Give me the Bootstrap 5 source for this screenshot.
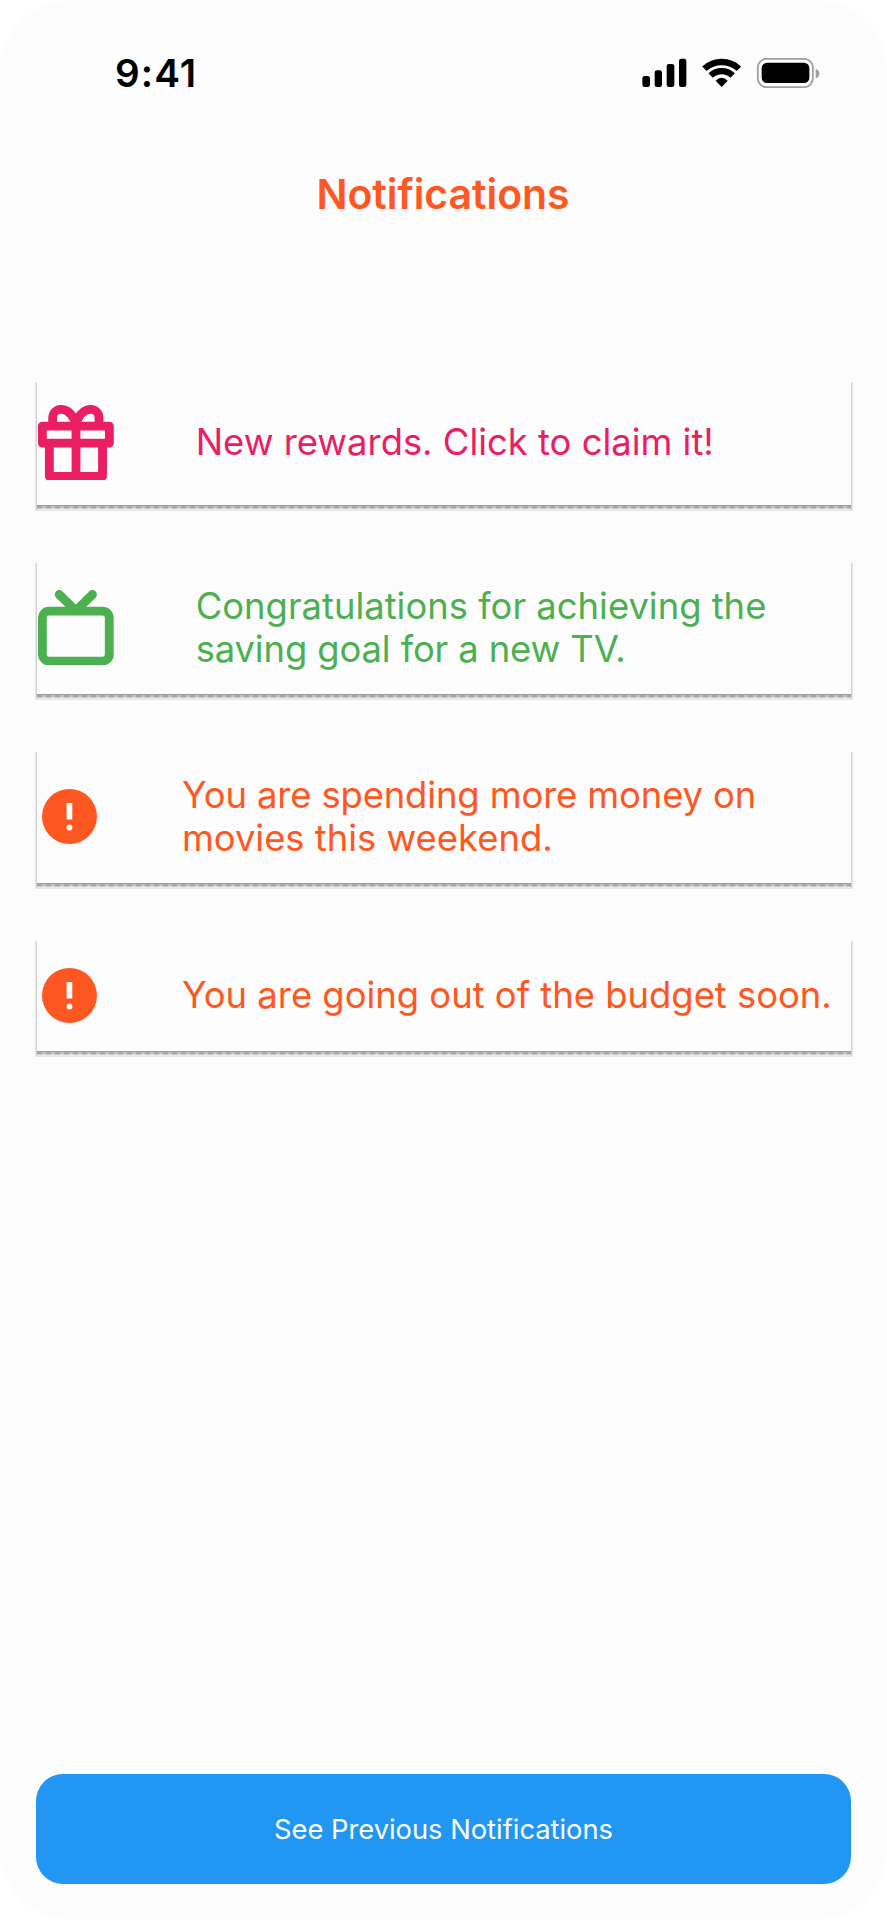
<!DOCTYPE html>
<html lang="en">
<head>
<meta charset="utf-8">
<meta name="viewport" content="width=device-width, initial-scale=1">
<title>Notifications</title>
<link rel="stylesheet" href="https://cdn.jsdelivr.net/npm/bootstrap@5.3.0/dist/css/bootstrap.min.css">
<style>
  body { background: #fff; font-family: Inter, "Liberation Sans", sans-serif; }
  .screen { height: 1920px; background: #fcfcfc; border-radius: 72px; padding: 0 36px; }
  .status { height: 146px; padding: 0 31px 0 79px; }
  .clock { font-size: 38.6px; font-weight: 600; color: #000; line-height: 1; letter-spacing: 1.1px; }
  .title { font-size: 40.9px; font-weight: 600; color: #ff5722; line-height: 50px; margin: 23px 1px 0 0; }
  .notices { gap: 56px; margin-top: 161px; }
  .notice {
    position: relative; font-size: 36.4px; line-height: 43.2px; margin-left: 1px;
    box-shadow: 0 1px 0 #9c9c9c, 0 3px 0 #b8b8b8, 0 4px 0 #d8d8d8, 0 5px 0 #ececec, 0 4px 0 1px #d2d2d2, 0 4px 0 2px #e6e6e6;
    background: #fcfcfc; padding-left: 1.4px;
  }
  .notice::after {
    content: ""; position: absolute; left: 0; right: 0; top: calc(100% + 1px); height: 3px;
    background: repeating-linear-gradient(90deg, rgba(0,0,0,.09) 0 5px, rgba(255,255,255,.12) 5px 9px);
  }
  .notice span { padding-top: 1px; }
  .notice.reward { color: #e91e63; height: 125px; }
  .notice.goal { color: #4caf50; height: 133px; }
  .notice.alert-two { color: #ff5722; height: 133px; }
  .notice.alert-one { color: #ff5722; height: 112px; }
  .tight { letter-spacing: -.12px; }
  .notice-icon { flex: none; }
  .wide-icon { width: 75.7px; margin-right: 81.6px; }
  .round-icon { width: 55px; margin: 0 85px 0 3.5px; }
  .previous { height: 110px; border-radius: 27px; background: #2196f3; color: #fff; font-size: 27.3px; margin: 0 0 36px; padding-top: 8px; border: 0; }
</style>
</head>
<body>
<main class="screen d-flex flex-column">
  <header class="status d-flex align-items-center justify-content-between">
    <span class="clock">9:41</span>
    <svg width="177.7" height="30" viewBox="127 84 533 90" aria-hidden="true">
      <rect x="128" y="138" width="23" height="33" rx="7"/>
      <rect x="165" y="121" width="22" height="50" rx="7"/>
      <rect x="201" y="102" width="23" height="69" rx="7"/>
      <rect x="238" y="86" width="22" height="85" rx="7"/>
      <g fill="none" stroke="#000" stroke-width="19">
        <path d="M314.2 116.4A76 76 0 0 1 417.8 116.4"/>
        <path d="M332.9 136.5A48.5 48.5 0 0 1 399.1 136.5"/>
      </g>
      <path d="M366 171L348 152Q366 134 384 152Z"/>
      <rect x="474.5" y="86.500" width="165" height="85" rx="26" fill="none" stroke="#a0a0a0" stroke-width="5.500"/>
      <rect x="486" y="98" width="143" height="61" rx="16"/>
      <path d="M648 117Q659 121 659 131T648 145Z" fill="#a0a0a0"/>
    </svg>
  </header>
  <h1 class="title text-center">Notifications</h1>
  <section class="notices d-flex flex-column">
    <article class="notice reward d-flex align-items-center">
      <svg class="notice-icon wide-icon" viewBox="55 103 227 227" fill="none" stroke="currentColor" stroke-width="26.500" stroke-linejoin="round" aria-hidden="true">
        <path d="M68 166.500H269V217.500H68ZM89 217.500V317H248.500V217.500M169 166.500V317"/>
        <path d="M99 166V142A25 26 0 0 1 124 116.200C146 116.200 166 138 169 166M238 166V142A25 26 0 0 0 213 116.200C191 116.200 172 138 169 166"/>
      </svg>
      <span>New rewards. Click to claim it!</span>
    </article>
    <article class="notice goal d-flex align-items-center">
      <svg class="notice-icon wide-icon" viewBox="55 120 227 227" fill="none" stroke="currentColor" stroke-width="26.500" stroke-linejoin="round" stroke-linecap="round" aria-hidden="true">
        <rect x="68.200" y="183.500" width="200.500" height="150" rx="20"/>
        <path d="M118.500 133.500L168.500 182L218.500 133.500"/>
      </svg>
      <span>Congratulations for achieving the<br><b class="tight fw-normal">saving goal for a new TV.</b></span>
    </article>
    <article class="notice alert-two d-flex align-items-center">
      <svg class="notice-icon round-icon" viewBox="0 0 55 55" aria-hidden="true"><circle cx="27.500" cy="27.500" r="27.500" fill="currentColor"/><path d="M24.600 14h5.700v16.500h-5.700z" fill="#fcfcfc"/><circle cx="27.500" cy="38.500" r="2.900" fill="#fcfcfc"/></svg>
      <span><b class="tight fw-normal">You are spending more money on</b><br>movies this weekend.</span>
    </article>
    <article class="notice alert-one d-flex align-items-center">
      <svg class="notice-icon round-icon" viewBox="0 0 55 55" aria-hidden="true"><circle cx="27.500" cy="27.500" r="27.500" fill="currentColor"/><path d="M24.600 14h5.700v16.500h-5.700z" fill="#fcfcfc"/><circle cx="27.500" cy="38.500" r="2.900" fill="#fcfcfc"/></svg>
      <span>You are going out of the budget soon.</span>
    </article>
  </section>
  <button class="previous btn mt-auto" type="button">See Previous Notifications</button>
</main>
<script src="https://cdn.jsdelivr.net/npm/bootstrap@5.3.0/dist/js/bootstrap.bundle.min.js"></script>
</body>
</html>
